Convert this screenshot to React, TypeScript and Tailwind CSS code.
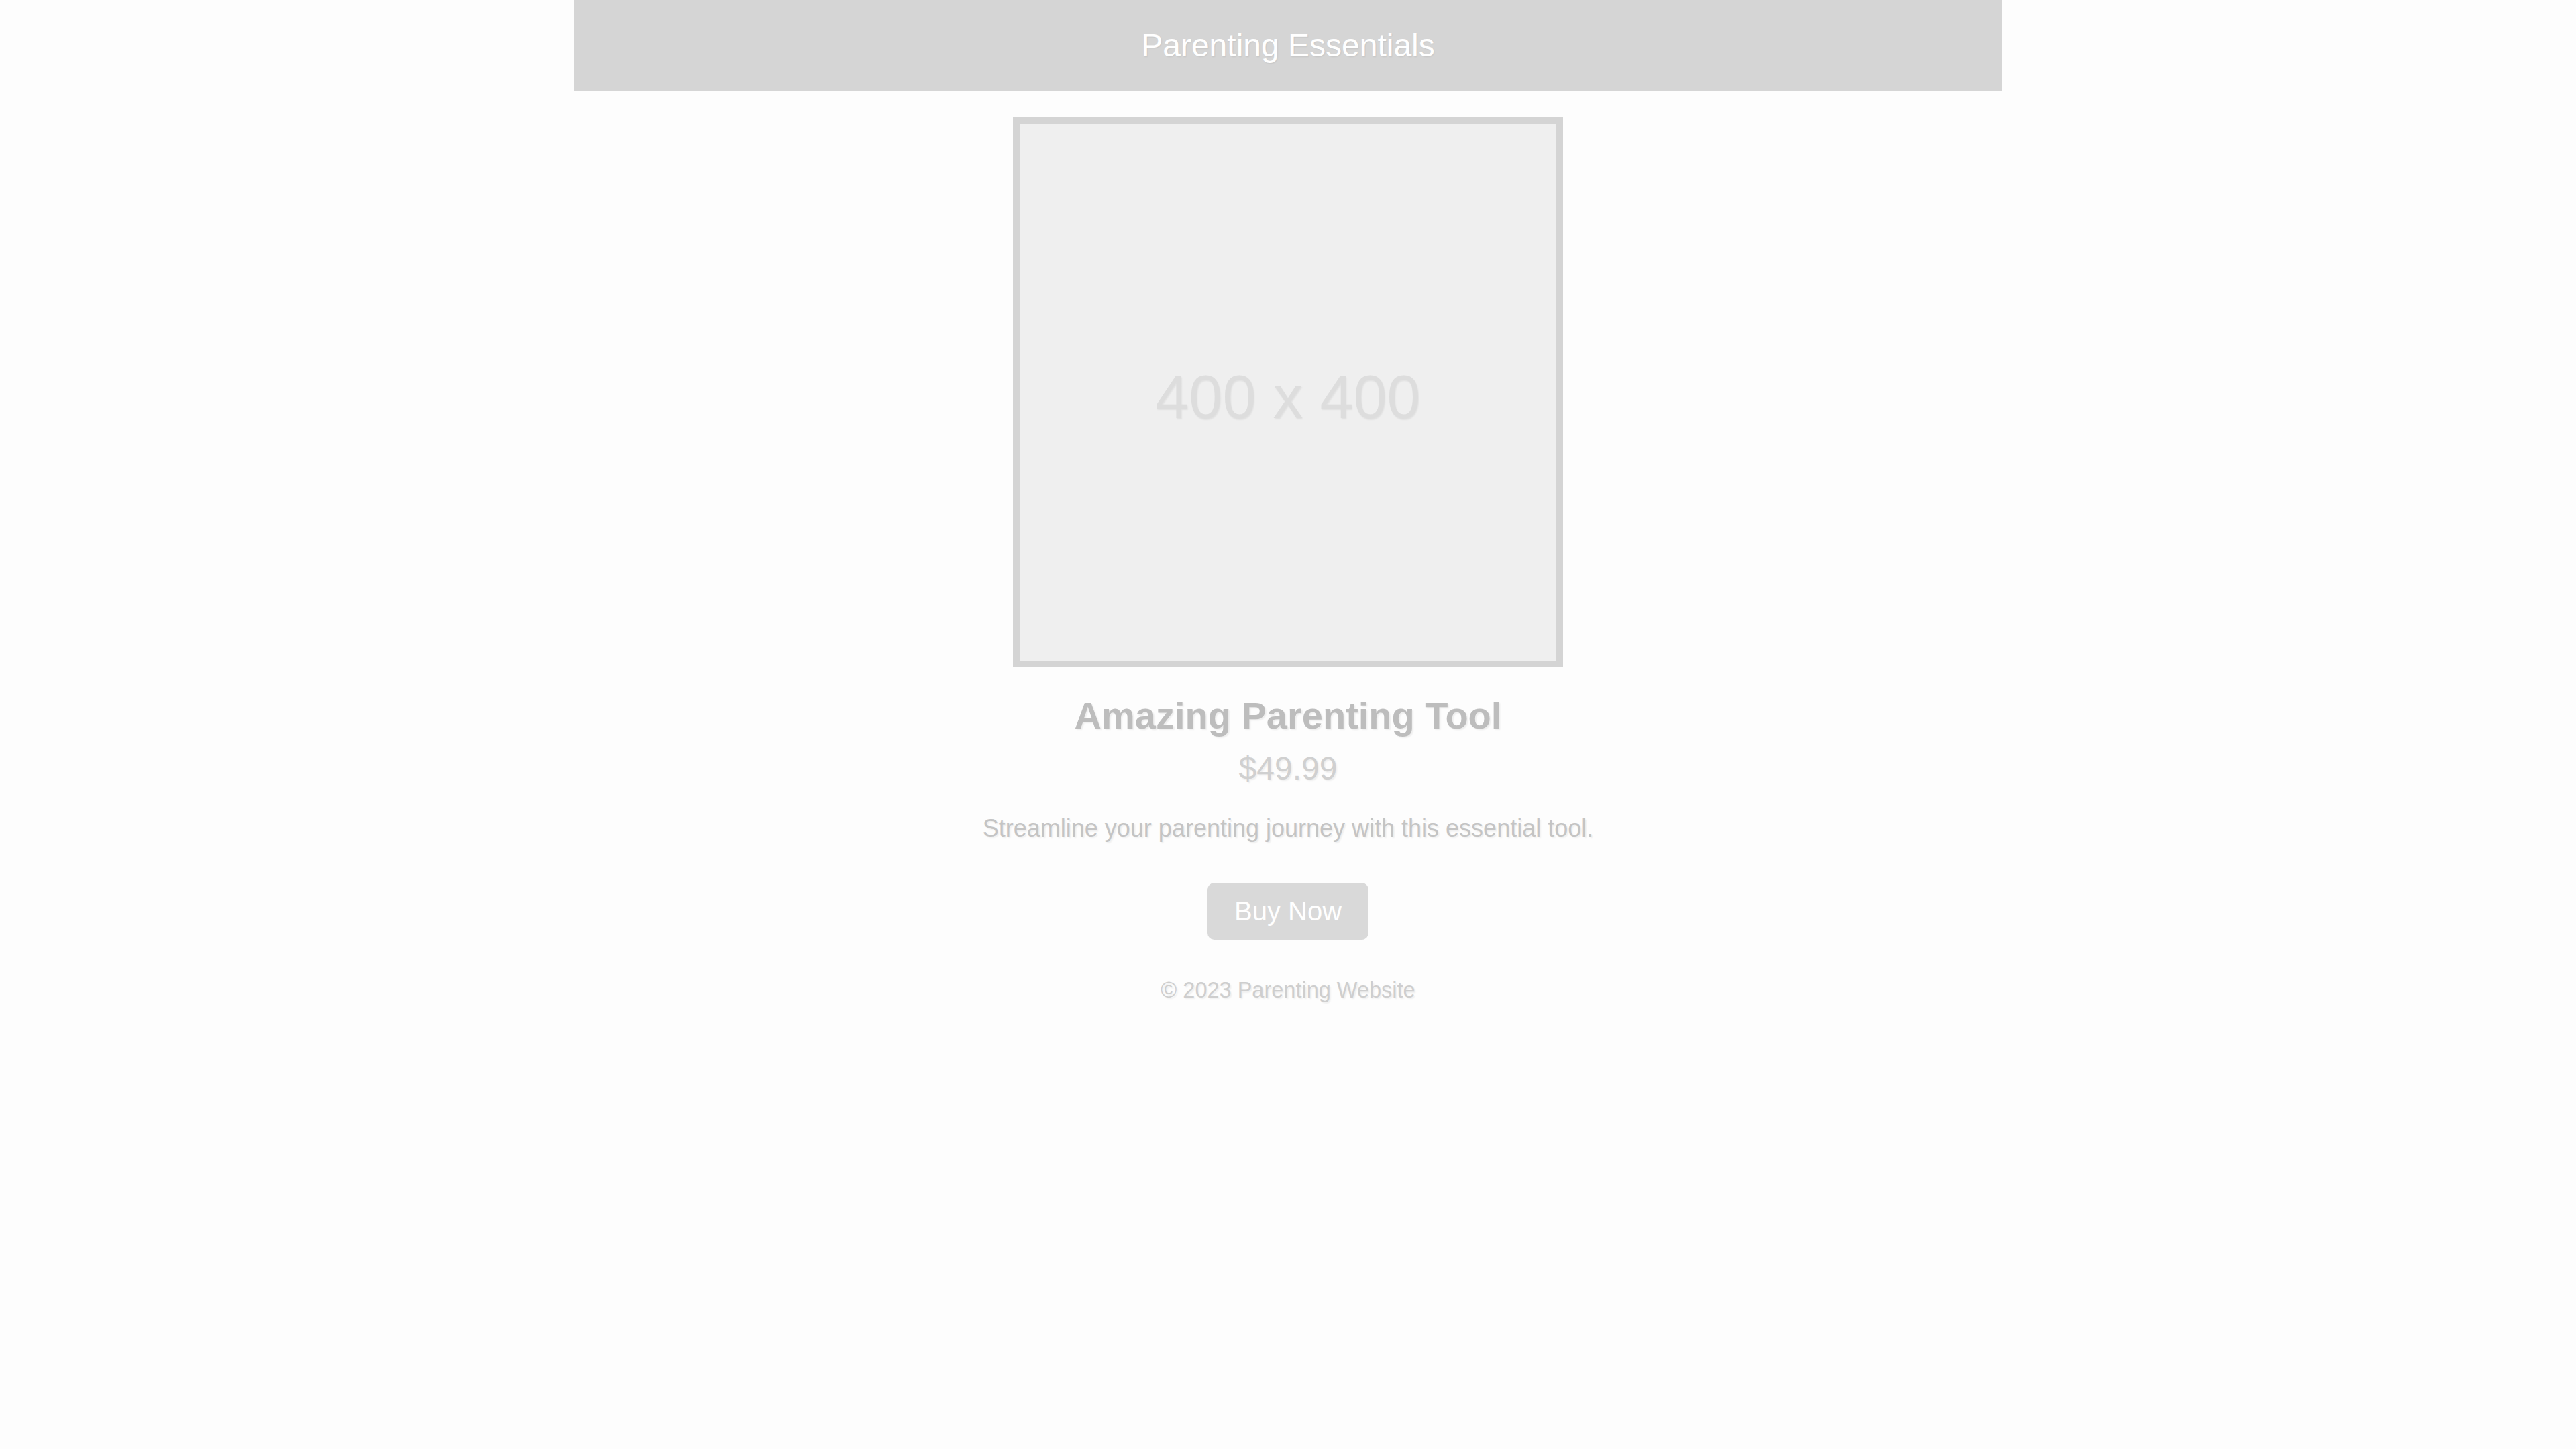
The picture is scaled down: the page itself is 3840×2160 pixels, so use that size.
import React from "react";

export default function App() {
  const font = { fontFamily: '"Liberation Sans", Arial, sans-serif' };
  return (
    <div className="min-h-[2160px] w-full bg-[#fdfdfd]" style={font}>
      <div className="mx-auto flex w-[2130px] flex-col items-center">
        <header className="flex h-[135px] w-full items-center justify-center bg-[#d5d5d5]">
          <h1 className="text-[48px] font-normal leading-[1.15] text-white [text-shadow:1px_1px_2px_rgba(0,0,0,0.08)]">
            Parenting Essentials
          </h1>
        </header>
        <main className="flex flex-col items-center">
          <div className="mt-[40px] flex h-[820px] w-[820px] items-center justify-center border-[10px] border-[#d4d4d4] bg-[#efefef] pt-[14px]">
            <span className="text-[90px] leading-none text-[#dddddd] [text-shadow:1px_2px_2px_rgba(0,0,0,0.06)]">
              400 x 400
            </span>
          </div>
          <h2 className="mt-[40px] text-[56px] font-bold leading-[1.15] text-[#bdbdbd] [text-shadow:2px_2px_2px_rgba(0,0,0,0.06)]">
            Amazing Parenting Tool
          </h2>
          <p className="mt-[19px] text-[48px] leading-[1.15] text-[#d0d0d0] [text-shadow:2px_2px_2px_rgba(0,0,0,0.06)]">
            $49.99
          </p>
          <p className="mt-[40px] text-[36px] leading-[1.15] text-[#c4c4c4] [text-shadow:2px_2px_2px_rgba(0,0,0,0.06)]">
            Streamline your parenting journey with this essential tool.
          </p>
          <button className="mt-[61px] flex h-[85px] w-[240px] items-center justify-center rounded-[10px] bg-[#d9d9d9] text-[40px] leading-none text-white">
            Buy Now
          </button>
        </main>
        <footer className="mt-[57px]">
          <p className="text-[32.5px] leading-[1.15] text-[#cecece] [text-shadow:2px_2px_2px_rgba(0,0,0,0.06)]">
            © 2023 Parenting Website
          </p>
        </footer>
      </div>
    </div>
  );
}
